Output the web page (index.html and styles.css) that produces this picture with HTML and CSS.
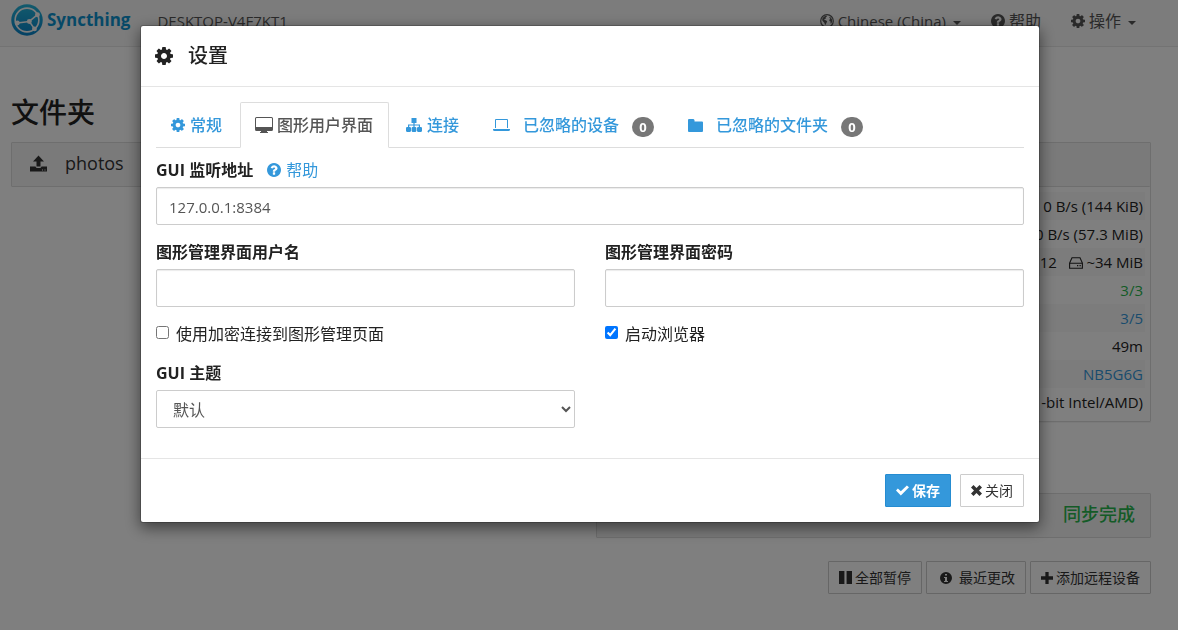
FILE: index.html
```html
<!DOCTYPE html>
<html lang="zh-CN">
<head>
<meta charset="utf-8">
<meta name="viewport" content="width=device-width, initial-scale=1">
<title>Syncthing</title>
<link rel="stylesheet" href="styles.css">
</head>
<body>
<svg class="sprite" aria-hidden="true">
  <defs>
    <linearGradient id="brand" x1="0" y1="1" x2="0" y2="0"><stop offset="0" stop-color="#0882c8"/><stop offset="1" stop-color="#26b6db"/></linearGradient>
  </defs>
  <symbol id="cog" viewBox="128 128 1536 1536"><path d="M1152 896q0-106-75-181t-181-75-181 75-75 181 75 181 181 75 181-75 75-181zm512-109v222q0 12-8 23t-20 13l-185 28q-19 54-39 91 35 50 107 138 10 12 10 25t-9 23q-27 37-99 108t-94 71q-12 0-26-9l-138-108q-44 23-91 38-16 136-29 186-7 28-36 28h-222q-14 0-24.500-8.500t-11.500-21.500l-28-184q-49-16-90-37l-141 107q-10 9-25 9-14 0-25-11-126-114-165-168-7-10-7-23 0-12 8-23 15-21 51-66.500t54-70.500q-27-50-41-99l-183-27q-13-2-21-12.500t-8-23.500v-222q0-12 8-23t19-13l186-28q14-46 39-92-40-57-107-138-10-12-10-24 0-10 9-23 26-36 98.500-107.500t94.500-71.500q13 0 26 10l138 107q44-23 91-38 16-136 29-186 7-28 36-28h222q14 0 24.500 8.500t11.500 21.500l28 184q49 16 90 37l142-107q9-9 24-9 13 0 25 10 129 119 165 170 7 8 7 22 0 12-8 23-15 21-51 66.500t-54 70.500q26 50 41 98l183 28q13 2 21 12.500t8 23.500z"/></symbol>
  <symbol id="question" viewBox="128 128 1536 1536"><path d="M1024 1376v-192q0-14-9-23t-23-9h-192q-14 0-23 9t-9 23v192q0 14 9 23t23 9h192q14 0 23-9t9-23zm256-672q0-88-55.500-163t-138.500-116-170-41q-243 0-371 213-15 24 8 42l132 100q7 6 19 6 16 0 25-12 53-68 86-92 34-24 86-24 48 0 85.500 26t37.500 59q0 38-20 61t-68 45q-63 28-115.500 86.500t-52.500 125.500v36q0 14 9 23t23 9h192q14 0 23-9t9-23q0-19 21.500-49.500t54.500-49.500q32-18 49-28.500t46-35 44.500-48 28-60.500 12.500-81zm384 192q0 209-103 385.500t-279.500 279.500-385.500 103-385.500-103-279.500-279.500-103-385.500 103-385.500 279.500-279.500 385.500-103 385.500 103 279.500 279.500 103 385.500z"/></symbol>
  <symbol id="globe" viewBox="0 0 14 14"><circle cx="7" cy="7" r="6.300" fill="none" stroke="currentColor" stroke-width="1.200"/><path d="M2.500 4 5 2l2-.3L6.500 3l-1 .3.700 1-1.700.9-.3.800 1.800.2 1.200 1.200-.8 1.600-.9 2-.9-1V9L3.300 7.800 2.200 6.300zM9 2.800l1.800.7 1.200 2 .2 2-1 2.200-.8-.5.200-1.600L9.300 7l.2-1.600L10.300 5z"/></symbol>
  <symbol id="desktop" viewBox="0 0 18 16"><path fill-rule="evenodd" d="M1.500 0h15A1.500 1.500 0 0 1 18 1.500v11a1.500 1.500 0 0 1-1.500 1.500H12v1h1v1H5v-1h1v-1H1.500A1.500 1.500 0 0 1 0 12.500v-11A1.500 1.500 0 0 1 1.500 0zM1 1.500V10h16V1.500L16.500 1h-15z"/></symbol>
  <symbol id="sitemap" viewBox="0 0 16 14"><path d="M5.500 0h5v5H8.600v1.500H14V9h1.200l.8.800V13l-.8 1h-3.400l-.8-1V9.800l.8-.8h1V7.600H8.600V9h1l.8.800V13l-.8 1H6.400l-.8-1V9.800l.8-.8h1V7.600H3.200V9h1l.8.800V13l-.8 1H.8L0 13V9.800L.8 9H2V6.500h5.400V5H5.500z"/></symbol>
  <symbol id="laptop" viewBox="0 0 17 12"><path fill-rule="evenodd" d="M3 0h11a1 1 0 0 1 1 1v8H2V1a1 1 0 0 1 1-1zm0 1v8h11V1zM0 10h17v.5Q17 12 15.500 12h-14Q0 12 0 10.500z"/></symbol>
  <symbol id="folder" viewBox="0 0 15 13"><path d="M1 0h4.500l1 1v1.500H14a1 1 0 0 1 1 1V12a1 1 0 0 1-1 1H1a1 1 0 0 1-1-1V1a1 1 0 0 1 1-1z"/></symbol>
  <symbol id="upload" viewBox="0 0 17 16"><path fill-rule="evenodd" d="M8.500 0 14 6h-3.500v5h-4V6H3zM0 11h5.500q.5 1.500 2 1.500h2q1.500 0 2-1.500H17v5H0zm12 3v1h1v-1zm2.500 0v1h1v-1z"/></symbol>
  <symbol id="hdd" viewBox="0 0 14 12"><path fill="none" stroke="currentColor" stroke-width="1.100" d="M3 .7h8L13.400 6v5.300H.6V6zM.6 6.200h12.800"/><path d="M8 8h1.300v1.300H8zM10.500 8h1.300v1.300h-1.300z"/></symbol>
  <symbol id="check" viewBox="0 0 14 11"><path d="M0 5.500 2 3.300l3.200 3L11.700 0 14 2.100 5.200 11z"/></symbol>
  <symbol id="times" viewBox="0 0 11 11"><path d="M2.500 0 5.500 3l3-3L11 2.500l-3 3 3 3L8.500 11l-3-3-3 3L0 8.500l3-3-3-3z"/></symbol>
  <symbol id="pause" viewBox="0 0 12 12"><path d="M0 0h5v12H0zM7 0h5v12H7z"/></symbol>
  <symbol id="info" viewBox="0 0 12 12"><path fill-rule="evenodd" d="M6 0a6 6 0 1 1 0 12A6 6 0 0 1 6 0zM5 2v1.500h2V2zM4 5v1h1v3H4v1h4V9H7V5z"/></symbol>
  <symbol id="plus" viewBox="0 0 11 11"><path d="M4 0h3v4h4v3H7v4H4V7H0V4h4z"/></symbol>
  <symbol id="identicon" viewBox="0 0 15 15"><path d="M3 0h3v3H3zM9 0h3v3H9zM0 3h3v3H0zM6 3h3v3H6zM12 3h3v3h-3zM3 6h9v3H3zM3 12h3v3H3zM9 12h3v3H9z"/></symbol>
</svg>

<nav class="navbar">
  <a class="brand" href="#">
    <svg class="brand-mark" viewBox="0 0 118 118" aria-hidden="true">
      <circle cx="59" cy="59" r="58" fill="url(#brand)"/>
      <g fill="none" stroke="#f8f8f8" stroke-width="6"><circle cx="59" cy="59" r="43.700"/><path d="M97.600 39.400 67.500 64.400 86.500 91.800M67.500 64.400 23.200 69.900"/></g>
      <g fill="#f8f8f8"><circle cx="97.600" cy="39.400" r="9"/><circle cx="86.500" cy="91.800" r="9"/><circle cx="67.500" cy="64.400" r="9"/><circle cx="23.200" cy="69.900" r="9"/></g>
    </svg>
    <span>Syncthing</span>
  </a>
  <span class="device-name">DESKTOP-V4F7KT1</span>
  <div class="nav-links">
    <a class="language" href="#"><svg class="i14"><use href="#globe"/></svg>Chinese (China)<i class="caret"></i></a>
    <a href="#"><svg class="i14"><use href="#question"/></svg>帮助</a>
    <a href="#"><svg class="i14"><use href="#cog"/></svg>操作<i class="caret"></i></a>
  </div>
</nav>

<main class="page">
  <section>
    <h3 class="page-title">文件夹</h3>
    <button type="button" class="panel-head folder"><svg class="i17"><use href="#upload"/></svg>photos</button>
  </section>
  <section class="devices">
    <div class="panel">
      <div class="panel-head"></div>
      <table class="stats">
        <tbody>
          <tr><td>0 B/s (144 KiB)</td></tr>
          <tr><td>0 B/s (57.3 MiB)</td></tr>
          <tr><td>12 &nbsp; <svg class="hdd"><use href="#hdd"/></svg> ~34 MiB</td></tr>
          <tr><td class="good">3/3</td></tr>
          <tr><td class="info">3/5</td></tr>
          <tr><td>49m</td></tr>
          <tr><td><a href="#">NB5G6G</a></td></tr>
          <tr><td>-bit Intel/AMD)</td></tr>
        </tbody>
      </table>
    </div>
    <button type="button" class="panel-head remote"><svg class="i15"><use href="#identicon"/></svg><span class="synced">同步完成</span></button>
    <div class="actions">
      <button type="button" class="btn"><svg class="i13"><use href="#pause"/></svg>全部暂停</button>
      <button type="button" class="btn wide"><svg class="i12"><use href="#info"/></svg>最近更改</button>
      <button type="button" class="btn"><svg class="i12"><use href="#plus"/></svg>添加远程设备</button>
    </div>
  </section>
</main>

<div class="overlay">
  <div class="modal" role="dialog" aria-modal="true" aria-labelledby="title">
    <header class="modal-header"><svg class="i18"><use href="#cog"/></svg><h4 id="title">设置</h4></header>
    <form class="modal-body">
      <ul class="tabs">
        <li><a href="#"><svg class="i14"><use href="#cog"/></svg>常规</a></li>
        <li><a class="active" href="#"><svg class="i18"><use href="#desktop"/></svg>图形用户界面</a></li>
        <li><a href="#"><svg class="i16"><use href="#sitemap"/></svg>连接</a></li>
        <li><a class="spaced" href="#"><svg class="laptop"><use href="#laptop"/></svg>已忽略的设备<span class="badge">0</span></a></li>
        <li><a class="spaced" href="#"><svg class="i15"><use href="#folder"/></svg>已忽略的文件夹<span class="badge">0</span></a></li>
      </ul>
      <div class="field">
        <div class="label-row"><label for="address">GUI 监听地址</label><a href="#"><svg class="i14"><use href="#question"/></svg>帮助</a></div>
        <input id="address" class="control" type="text" value="127.0.0.1:8384">
      </div>
      <div class="columns">
        <div class="field"><label for="user">图形管理界面用户名</label><input id="user" class="control" type="text"></div>
        <div class="field"><label for="password">图形管理界面密码</label><input id="password" class="control" type="password"></div>
        <label class="check"><input type="checkbox">使用加密连接到图形管理页面</label>
        <label class="check"><input type="checkbox" checked>启动浏览器</label>
        <div class="field"><label for="theme">GUI 主题</label><select id="theme" class="control select"><option>默认</option></select></div>
      </div>
    </form>
    <footer class="modal-footer">
      <button type="button" class="btn primary"><svg class="i13"><use href="#check"/></svg>保存</button>
      <button type="button" class="btn"><svg class="i11"><use href="#times"/></svg>关闭</button>
    </footer>
  </div>
</div>
</body>
</html>
```
FILE: styles.css
```css
* { box-sizing: border-box; }
body {
  margin: 0;
  min-height: 100vh;
  background: #fff;
  color: #222;
  font: 16px/24px "Open Sans", "Noto Sans CJK SC", sans-serif;
}
svg { fill: currentColor; flex: none; }
a { color: #3498db; text-decoration: none; }
button, input, select { font: inherit; color: inherit; }
h3, h4, ul { margin: 0; padding: 0; font-weight: 500; }
.sprite { position: absolute; width: 0; height: 0; }
.i11 { width: 11px; height: 11px; }
.i12 { width: 12px; height: 12px; }
.i13 { width: 13px; height: 13px; }
.i14 { width: 14px; height: 14px; }
.i15 { width: 15px; height: 15px; }
.i16 { width: 16px; height: 16px; }
.i17 { width: 17px; height: 17px; }
.i18 { width: 18px; height: 18px; }

.navbar {
  display: flex;
  align-items: center;
  height: 47px;
  padding: 0 42px 6px 11px;
  background: #f8f8f8;
  border-bottom: 1px solid #e7e7e7;
}
.brand { display: flex; align-items: center; gap: 4px; color: #0d92cf; font-size: 17px; font-weight: 700; }
.brand-mark { width: 32px; height: 32px; }
.device-name, .language, .stats, .control { font-size: 15px; }
.device-name { margin: 2px 0 0 27px; color: #555; }
.nav-links { display: flex; gap: 30px; margin: 2px 0 0 auto; }
.nav-links a { display: flex; align-items: center; gap: 4px; color: #555; }
.caret { margin: 4px 0 0 3px; border: 4px solid transparent; border-top-color: currentColor; border-bottom: 0; }

.page { display: grid; grid-template-columns: 1fr 1fr; gap: 30px; padding: 45px 27px 20px 11px; }
.page-title { margin-bottom: 10px; font-size: 28px; line-height: 40px; }
.panel-head {
  display: flex;
  align-items: center;
  width: 100%;
  height: 45px;
  padding: 0 15px 3px 18px;
  background: #f5f5f5;
  border: 1px solid #ddd;
  border-radius: 1px;
  text-align: left;
}
.folder { gap: 18px; font-size: 18px; color: #333; }
.devices { padding-top: 50px; }
.panel { border: 1px solid #ddd; border-radius: 1px; box-shadow: 0 1px 1px rgba(0, 0, 0, .05); }
.panel .panel-head { height: 44px; border-width: 0 0 1px; }
.stats { width: calc(100% - 10px); margin: 5px; border-collapse: collapse; text-align: right; }
.stats td { height: 28px; padding: 0 2px; }
.stats tr:nth-child(odd) { background: #f9f9f9; }
.hdd { width: 14px; height: 12px; vertical-align: -1px; }
.good { color: #29b74e; }
.info { color: #3498db; }
.remote { margin-top: 71px; }
.synced { margin-left: auto; color: #29b74e; font-size: 18px; font-weight: 500; }
.actions { display: flex; justify-content: flex-end; gap: 4px; margin-top: 23px; }
.btn {
  display: flex;
  align-items: center;
  gap: 3px;
  height: 33px;
  padding: 0 10px;
  border: 1px solid #ccc;
  border-radius: 1px;
  background: #fff;
  color: #333;
  font-size: 14px;
}
.btn.wide { gap: 7px; padding-left: 13px; }
.btn.primary { background: #3498db; border-color: #258cd1; color: #fff; font-weight: 700; }

.overlay { position: fixed; inset: 0; padding: 25px 0 0 2px; background: rgba(0, 0, 0, .5); overflow: auto; }
.modal {
  max-width: 900px;
  margin: 0 auto;
  background: #fff;
  background-clip: padding-box;
  border: 1px solid rgba(0, 0, 0, .2);
  border-radius: 3px;
  box-shadow: 0 5px 15px rgba(0, 0, 0, .5);
}
.modal-header { display: flex; align-items: center; gap: 15px; padding: 15px 14px; border-bottom: 1px solid #e5e5e5; }
.modal-header h4 { font-size: 20px; line-height: 30px; }
.modal-body { padding: 15px; }
.tabs { display: flex; gap: 2px; margin-bottom: 10px; border-bottom: 1px solid #ddd; list-style: none; }
.tabs a { display: flex; align-items: center; gap: 5px; margin-bottom: -1px; padding: 10px 15px 10px 14px; border: 1px solid transparent; border-radius: 2px 2px 0 0; }
.tabs .active { gap: 4px; background: #fff; border-color: #ddd #ddd #fff; color: #555; }
.tabs .spaced { gap: 13px; padding: 10px 15px; }
.laptop { width: 17px; height: 12px; }
.badge { min-width: 22px; padding: 0 7px; margin-top: 4px; border-radius: 10px; background: #777; color: #fff; font-size: 13px; font-weight: 700; line-height: 20px; text-align: center; }
.field { min-width: 0; }
.field label { display: inline-block; margin-bottom: 5px; font-weight: 700; }
.label-row { display: flex; gap: 14px; }
.label-row a { display: flex; align-items: center; gap: 5px; height: 24px; }
.control {
  display: block;
  width: 100%;
  height: 38px;
  padding: 1px 12px 0;
  border: 1px solid #ccc;
  border-radius: 2px;
  background: #fff;
  box-shadow: inset 0 1px 1px rgba(0, 0, 0, .08);
  color: #555;
}
.select { font-size: 16px; box-shadow: none; padding-right: 4px; }
.columns { display: grid; grid-template-columns: 1fr 1fr; gap: 15px 30px; margin: 15px 0; }
.check { display: flex; align-items: center; gap: 7px; }
.check input { width: 13px; height: 13px; margin: 0 0 3px; }
.modal-footer { display: flex; justify-content: flex-end; gap: 9px; padding: 15px; border-top: 1px solid #e5e5e5; }
```
